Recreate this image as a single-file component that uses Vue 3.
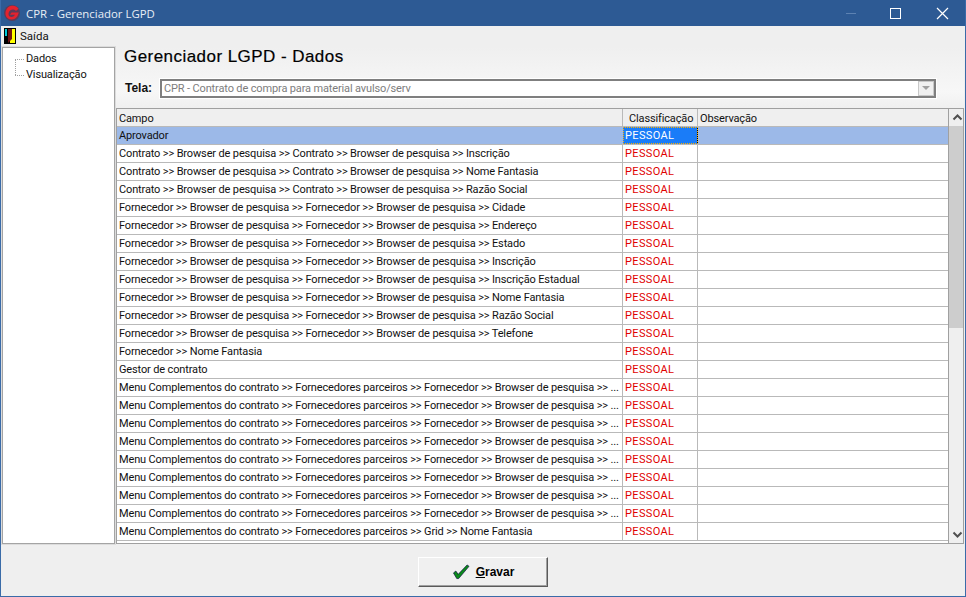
<script setup>
const b = 'Browser de pesquisa'
const f = `Fornecedor >> ${b} >> Fornecedor >> ${b} >> `
const c = `Contrato >> ${b} >> Contrato >> ${b} >> `
const m = `Menu Complementos do contrato >> Fornecedores parceiros >> Fornecedor >> ${b} >> ...`
const rows = [
  'Aprovador',
  c + 'Inscrição', c + 'Nome Fantasia', c + 'Razão Social',
  f + 'Cidade', f + 'Endereço', f + 'Estado', f + 'Inscrição', f + 'Inscrição Estadual',
  f + 'Nome Fantasia', f + 'Razão Social', f + 'Telefone',
  'Fornecedor >> Nome Fantasia', 'Gestor de contrato',
  m, m, m, m, m, m, m, m,
  'Menu Complementos do contrato >> Fornecedores parceiros >> Grid >> Nome Fantasia'
]
</script>

<template>
  <div class="win">
    <header class="title">
      <svg class="logo" viewBox="0 0 18 18" width="18" height="18">
        <circle cx="9" cy="9" r="8" fill="#5c3a58" />
        <path d="M15.500 4.800A7 7 0 0 0 3 6.500C1.500 10 3 15.500 8.500 15.500 11 15.500 13 14.500 14.500 12L15.800 8.500H8.500L7 10.800H12C11 12.500 10 13 8.500 13 5.500 13 5 10 6 8 7 5.500 10.500 4.500 13 7Z" fill="#e4222e" />
      </svg>
      <span class="title-text">CPR - Gerenciador LGPD</span>
      <div class="controls">
        <span class="min"></span>
        <span class="max"></span>
        <svg width="13" height="13" viewBox="0 0 13 13"><path d="M1 1l11 11M12 1L1 12" stroke="#fff" stroke-width="1.2" /></svg>
      </div>
    </header>

    <nav class="menu">
      <svg class="door" width="12" height="16" viewBox="0 0 12 16">
        <rect width="12" height="16" fill="#000" />
        <rect x="1" y="1" width="2" height="7" fill="#00c8d8" />
        <rect x="6" y="1" width="5" height="14" fill="#ffff00" />
        <path d="M4 1h4v10l-4 4z" fill="#701414" />
      </svg>
      <span>Saída</span>
    </nav>

    <main class="body">
      <aside class="tree">
        <div class="node">Dados</div>
        <div class="node">Visualização</div>
      </aside>

      <section class="content">
        <h1>Gerenciador LGPD - Dados</h1>
        <div class="tela">
          <label>Tela:</label>
          <div class="combo">
            <span>CPR - Contrato de compra para material avulso/serv</span>
            <i class="drop"><b></b></i>
          </div>
        </div>

        <div class="grid">
          <div class="rows">
            <div class="row head">
              <div class="cell c1">Campo</div>
              <div class="cell c2">Classificação</div>
              <div class="cell c3">Observação</div>
            </div>
            <div v-for="(r, i) in rows" :key="i" class="row" :class="{ sel: i === 0 }">
              <div class="cell c1">{{ r }}</div>
              <div class="cell c2 red" :class="{ focus: i === 0 }">PESSOAL</div>
              <div class="cell c3"></div>
            </div>
          </div>
          <div class="scroll">
            <svg width="17" height="17" viewBox="0 0 17 17"><path d="M4.500 10.500l4-4 4 4" fill="none" stroke="#505050" stroke-width="2" /></svg>
            <div class="track"><div class="thumb"></div></div>
            <svg width="17" height="17" viewBox="0 0 17 17"><path d="M4.500 6.500l4 4 4-4" fill="none" stroke="#505050" stroke-width="2" /></svg>
          </div>
        </div>
      </section>
    </main>

    <footer class="foot">
      <button class="save">
        <svg width="18" height="16" viewBox="0 0 19 17">
          <path d="M1.500 9.500l2.500-2 2.500 3.500L16 1l2 1.500L7 15.500H5z" fill="#0a8a1a" stroke="#06063a" stroke-width=".7" />
        </svg>
        <span><u>G</u>ravar</span>
      </button>
    </footer>
  </div>
</template>

<style scoped>
.win {
  width: 966px;
  height: 597px;
  box-sizing: border-box;
  border: 1px solid #3a6ba8;
  border-top: 0;
  background: #efefef;
  display: flex;
  flex-direction: column;
  font-family: Roboto, "Liberation Sans", sans-serif;
  font-size: 11px;
  letter-spacing: -.14px;
  color: #111;
  overflow: hidden;
}
.title {
  height: 26px;
  margin: 0 -1px;
  background: #2d5a94;
  color: #fff;
  display: flex;
  align-items: center;
  padding-left: 3px;
  flex: none;
  letter-spacing: 0;
}
.logo { margin-right: 5px; }
.title-text { font-family: "Open Sans", sans-serif; font-size: 11.400px; color: #e8eef6; }
.controls {
  margin-left: auto;
  display: flex;
  align-items: center;
}
.min { width: 10px; height: 1px; background: #5d82b2; margin-right: 34px; }
.max { width: 9px; height: 9px; border: 1px solid #fff; margin-right: 35px; }
.controls svg { margin-right: 17px; }
.menu {
  height: 19px;
  display: flex;
  align-items: center;
  gap: 4px;
  padding-left: 3px;
  flex: none;
  font-size: 11.500px;
  letter-spacing: 0;
}
.body {
  flex: 1;
  min-height: 0;
  display: flex;
  padding: 2px 1px 0 1px;
  gap: 1px;
}
.tree {
  width: 113px;
  height: 497px;
  box-sizing: border-box;
  background: #fff;
  border: 1px solid #a4a4a4;
  box-shadow: inset 0 0 0 1px #fff, 0 0 0 1px #dcdcdc;
  padding: 3px 0 0 23px;
}
.node { height: 16px; line-height: 16px; position: relative; }
.node::before {
  content: "";
  position: absolute;
  left: -11px;
  top: 8px;
  width: 9px;
  border-top: 1px dotted #a0a0a0;
}
.node:first-child::after {
  content: "";
  position: absolute;
  left: -11px;
  top: 8px;
  height: 16px;
  border-left: 1px dotted #a0a0a0;
}
.content {
  flex: 1;
  min-width: 0;
  display: flex;
  flex-direction: column;
  background: linear-gradient(#efefef, #f7f7f7 45px, #efefef 62px);
}
h1 {
  margin: 0;
  padding: 0 0 0 8px;
  height: 24px;
  box-sizing: border-box;
  font-family: "Liberation Sans", sans-serif;
  font-size: 17px;
  line-height: 20px;
  font-weight: 400;
  letter-spacing: .45px;
  color: #000;
  -webkit-text-stroke: .2px #000;
}
.tela {
  height: 19px;
  display: flex;
  align-items: center;
  padding-left: 9px;
  margin-top: 8px;
}
.tela label {
  font-weight: 700;
  width: 35px;
  font-size: 12px;
  letter-spacing: 0;
  font-family: "Liberation Sans", sans-serif;
}
.combo {
  width: 776px;
  height: 19px;
  box-sizing: border-box;
  border: 2px solid #7f7f7f;
  outline: 1px solid #fff;
  background: #fff;
  color: #7d7d7d;
  display: flex;
  align-items: center;
  padding: 1px 0 0 2px;
  position: relative;
}
.drop {
  position: absolute;
  right: 0;
  top: 0;
  width: 16px;
  height: 15px;
  background: #f0f0f0;
  border: 1px solid #c8c8c8;
  box-sizing: border-box;
  display: flex;
  align-items: center;
  justify-content: center;
}
.drop b {
  border: 4px solid transparent;
  border-top: 4px solid #a0a0a0;
  border-bottom: 0;
}
.grid {
  height: 437px;
  box-sizing: border-box;
  margin-top: 10px;
  border: 1px solid #a0a0a0;
  background: #fff;
  display: flex;
  overflow: hidden;
}
.rows { width: 831px; flex: none; overflow: hidden; border-right: 1px solid #a0a0a0; }
.row { height: 18px; display: flex; box-sizing: border-box; border-bottom: 1px solid #b9b9b9; line-height: 18px; }
.cell { box-sizing: border-box; padding-left: 2px; white-space: nowrap; overflow: hidden; }
.c1 { width: 506px; border-right: 1px solid #b9b9b9; }
.c2 { width: 75px; border-right: 1px solid #b9b9b9; }
.c3 { flex: 1; }
.head { background: #efefef; line-height: 19px; }
.head .c2 { padding-left: 6px; }
.red { color: #e00000; letter-spacing: .35px; }
.sel { background: #9cb9e8; }
.sel .c1, .sel .c2 { border-right-color: #9cb9e8; }
.focus {
  background: #1a7cf8;
  color: #fff;
  outline: 1px dotted #ffb000;
  outline-offset: -1px;
  border-right-color: #000 !important;
}
.scroll { flex: 1; display: flex; flex-direction: column; background: #efefef; }
.scroll svg { flex: none; }
.track { flex: 1; }
.thumb { height: 202px; background: #cdcdcd; }
.foot {
  height: 52px;
  flex: none;
  display: flex;
  justify-content: center;
  align-items: flex-start;
  padding-top: 13px;
  box-sizing: border-box;
}
.save {
  width: 130px;
  height: 30px;
  box-sizing: border-box;
  background: #f0f0f0;
  border: 1px solid;
  border-color: #fff #5a5a5a #5a5a5a #fff;
  box-shadow: inset -1px -1px 0 #a0a0a0;
  display: flex;
  align-items: center;
  justify-content: center;
  gap: 6px;
  padding: 0;
  font: 700 12px "Liberation Sans", Arial, sans-serif;
  letter-spacing: 0;
  color: #000;
}
</style>
